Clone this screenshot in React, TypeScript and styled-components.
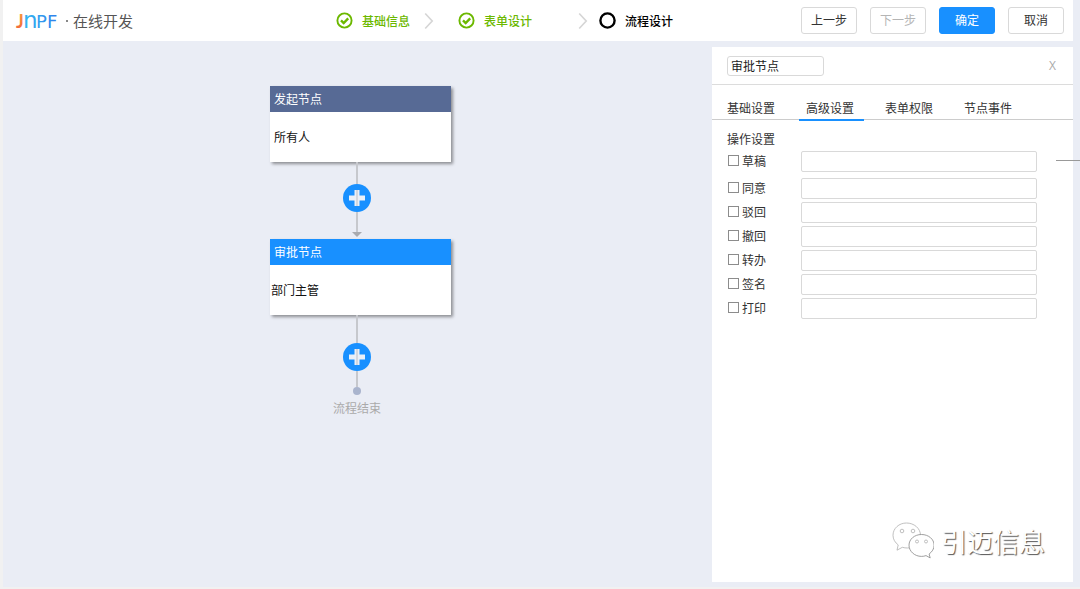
import React, { useState } from "react";
import styled, { createGlobalStyle } from "styled-components";

const GlobalStyle = createGlobalStyle`
  * { box-sizing: border-box; }
  body {
    margin: 0;
    background: #f1f1f1;
    color: #333;
    font-family: "Noto Sans CJK SC", sans-serif;
    font-size: 12px;
    line-height: 16px;
  }
  button, input { font: inherit; color: inherit; }
`;

const Page = styled.div`
  display: flex;
  min-height: 100vh;
  padding: 0 0 2px 3px;
`;

const Shell = styled.div`
  flex: 1;
  display: flex;
  flex-direction: column;
  background: #eaedf5;
`;

const Header = styled.header`
  display: flex;
  align-items: center;
  height: 41px;
  margin-right: 7px;
  padding: 0 9px 0 12px;
  background: #fff;
`;

const Brand = styled.div`
  display: flex;
  align-items: center;
  width: 321px;
  color: #555;
  font-size: 15px;
  line-height: 20px;
`;

const BrandDot = styled.span`
  width: 2px;
  height: 2px;
  margin: 0 5px;
  background: #888;
`;

const Steps = styled.ol`
  flex: 1;
  display: flex;
  margin: 0;
  padding: 0;
  list-style: none;
`;

const Step = styled.li<{ $width: number; $after: number; $done: boolean }>`
  display: flex;
  align-items: center;
  gap: 9px;
  width: ${(p) => p.$width}px;
  padding-right: ${(p) => p.$after}px;
  color: ${(p) => (p.$done ? "#6cb800" : "#000")};
  font-weight: 500;
  white-space: nowrap;

  svg:last-child { margin-left: auto; }
`;

const Actions = styled.div`
  display: flex;
  gap: 13px;
`;

const ActionButton = styled.button<{ $primary?: boolean }>`
  width: 56px;
  height: 27px;
  padding: 0 0 2px;
  border: 1px solid ${(p) => (p.$primary ? "#1890ff" : "#d9d9d9")};
  border-radius: 3px;
  background: ${(p) => (p.$primary ? "#1890ff" : "#fff")};
  color: ${(p) => (p.$primary ? "#fff" : "#333")};
  &:disabled { color: #b5b5b5; }
`;

const Workspace = styled.div`
  flex: 1;
  display: flex;
`;

const Canvas = styled.main`
  flex: 1;
  display: flex;
  justify-content: center;
  padding: 45px 0 0 6px;
`;

const Flow = styled.div`
  width: 181px;
`;

const Node = styled.section`
  background: #fff;
  box-shadow: 2px 2px 3px rgba(0, 0, 0, 0.4);
`;

const NodeTitle = styled.h2<{ $color: string }>`
  margin: 0;
  padding: 5px 4px;
  background: ${(p) => p.$color};
  color: #fff;
  font-size: 12px;
  font-weight: 400;
  line-height: 16px;
`;

const NodeBody = styled.p<{ $inset: number }>`
  margin: 0;
  padding: 17px ${(p) => p.$inset}px;
  color: #111;
`;

const Link = styled.div`
  display: flex;
  flex-direction: column;
  align-items: center;
  width: 174px;
`;

const Line = styled.div<{ $length: number }>`
  width: 2px;
  height: ${(p) => p.$length}px;
  background: #c6c8cd;
`;

const AddButton = styled.button`
  display: block;
  width: 28px;
  height: 28px;
  padding: 0;
  border: 0;
  border-radius: 50%;
  background: #1890ff;
  svg { display: block; }
`;

const Arrow = styled.div`
  margin-bottom: 2px;
  border: 5px solid transparent;
  border-top-color: #a9abb0;
  border-bottom-width: 0;
`;

const EndDot = styled.div`
  width: 8px;
  height: 8px;
  border-radius: 50%;
  background: #a9b4cd;
`;

const EndLabel = styled.span`
  margin-top: 5px;
  color: #aaa;
`;

const Panel = styled.aside`
  position: relative;
  width: 361px;
  margin: 6px 7px 5px 0;
  background: #fff;
`;

const PanelHead = styled.div`
  display: flex;
  align-items: center;
  justify-content: space-between;
  height: 38px;
  padding: 0 17px 0 15px;
  border-bottom: 1px solid #dcdcdc;
`;

const NameInput = styled.input`
  width: 97px;
  height: 20px;
  padding: 0 3px;
  border: 1px solid #d9d9d9;
  border-radius: 3px;
  color: #222;
`;

const CloseButton = styled.button`
  padding: 0;
  border: 0;
  background: none;
  color: #aaa;
  font-family: "Open Sans", sans-serif;
`;

const Tabs = styled.div`
  display: flex;
  gap: 14px;
  height: 35px;
  padding-left: 8px;
  border-bottom: 1px solid #ccc;
`;

const Tab = styled.button<{ $active: boolean }>`
  width: 65px;
  height: 36px;
  padding: 11px 0 0 7px;
  border: 0;
  border-bottom: 2px solid ${(p) => (p.$active ? "#1890ff" : "transparent")};
  background: none;
  text-align: left;
  white-space: nowrap;
`;

const Settings = styled.fieldset`
  display: flex;
  flex-direction: column;
  gap: 3px;
  margin: 0;
  padding: 0 36px 0 16px;
  border: 0;
`;

const SettingsTitle = styled.legend`
  margin-left: -1px;
  padding: 11px 0 4px;
`;

const Row = styled.div`
  display: flex;
  align-items: center;
  height: 21px;
  &:first-of-type { margin-bottom: 3px; }
`;

const CheckLabel = styled.label`
  display: flex;
  align-items: center;
  gap: 3px;
  width: 73px;
  padding-bottom: 1px;
`;

const Checkbox = styled.input`
  appearance: none;
  width: 11px;
  height: 11px;
  margin: 0 0 1px;
  border: 1px solid #8c8c8c;
  background: #fff;
  &:checked { background: #1890ff; }
`;

const TextBox = styled.input`
  flex: 1;
  min-width: 0;
  height: 21px;
  padding: 0 4px;
  border: 1px solid #d9d9d9;
  border-radius: 2px;
`;

const EdgeLine = styled.div`
  position: absolute;
  top: 113px;
  right: -7px;
  width: 24px;
  height: 1px;
  background: #999;
`;

const Watermark = styled.div`
  position: absolute;
  right: 28px;
  bottom: 22px;
  display: flex;
  align-items: center;
  gap: 7px;
  color: #fff;
  font-size: 26px;
  line-height: 38px;
  text-shadow: 1px 1px 1px #555;
`;

const Logo = () => (
  <svg width="46" height="36" viewBox="0 0 46 36" role="img" aria-label="JNPF">
    <defs>
      <linearGradient id="warm" x1="0" y1="0" x2="0" y2="1">
        <stop offset="0" stopColor="#f9a13a" />
        <stop offset="1" stopColor="#f0603c" />
      </linearGradient>
      <linearGradient id="cool" gradientUnits="userSpaceOnUse" x1="9" y1="0" x2="44" y2="0">
        <stop offset="0" stopColor="#35b8f2" />
        <stop offset="1" stopColor="#2f7bea" />
      </linearGradient>
    </defs>
    <g fontFamily="'DejaVu Sans', sans-serif" fontSize="18">
      <text x="1" y="25" fill="url(#warm)" fontFamily="Lato, sans-serif" fontWeight="700">J</text>
      <text x="8" y="25" fill="url(#cool)" fontSize="23">n</text>
      <text x="21" y="25" fill="url(#cool)">P</text>
      <text x="32" y="25" fill="url(#cool)">F</text>
    </g>
  </svg>
);

const StepIcon = ({ done }: { done: boolean }) => (
  <svg width="17" height="17" viewBox="0 0 17 17" fill="none" stroke="currentColor" aria-hidden="true">
    <circle cx="8.5" cy="8.5" r="7.1" strokeWidth={done ? 1.9 : 2.4} />
    {done && <path d="M5 8.3l2.7 2.7 4.5-4.6" strokeWidth="2.4" />}
  </svg>
);

const Chevron = () => (
  <svg width="10" height="18" viewBox="0 0 10 18" fill="none" stroke="#d6d6d6" strokeWidth="1.7" aria-hidden="true">
    <path d="M1.2 1.5L8.2 9l-7 7.5" />
  </svg>
);

const Plus = () => (
  <svg width="28" height="28" viewBox="0 0 28 28" aria-hidden="true">
    <path d="M11.5 6h5v5.500H22v5h-5.500V22h-5v-5.500H6v-5h5.500z" fill="#eaf0f8" />
    <path d="M14 6v16" stroke="#c9ccd3" strokeWidth="1.4" />
  </svg>
);

const WeChat = () => (
  <svg width="43" height="38" viewBox="0 0 43 38" fill="#fff" stroke="#b0b0b0" strokeWidth="0.8" aria-hidden="true">
    <path d="M15.500 1C8 1 2 6.400 2 13.300c0 4 2.100 7.300 5.200 9.600L6 28.200l5.300-2.900c1.700.5 3.400.7 5.200.7 7.500 0 13-5.500 13-12.600S23 1 15.500 1z" />
    <circle cx="11" cy="9" r="1.800" />
    <circle cx="22" cy="9" r="1.800" />
    <path d="M30.500 12.500c-7 0-12.500 4.700-12.500 10.700s5.500 11.200 12.500 11.200c1.600 0 3.100-.3 4.500-.8l4.200 2.300-1.100-3.900c3-2.100 5-5.200 5-8.800 0-6-5.600-10.700-12.600-10.700z" stroke="#888" />
    <circle cx="26" cy="19.500" r="1.500" />
    <circle cx="35" cy="19.500" r="1.500" />
  </svg>
);

const TABS = ["基础设置", "高级设置", "表单权限", "节点事件"];
const OPERATIONS = ["草稿", "同意", "驳回", "撤回", "转办", "签名", "打印"];

export default function App() {
  const [tab, setTab] = useState(1);
  const [name, setName] = useState("审批节点");

  return (
    <Page>
      <GlobalStyle />
      <Shell>
        <Header>
          <Brand>
            <Logo />
            <BrandDot />
            在线开发
          </Brand>
          <Steps>
            <Step $width={122} $after={24} $done>
              <StepIcon done />
              基础信息
              <Chevron />
            </Step>
            <Step $width={141} $after={11} $done>
              <StepIcon done />
              表单设计
              <Chevron />
            </Step>
            <Step $width={80} $after={0} $done={false}>
              <StepIcon done={false} />
              <span>流程设计</span>
            </Step>
          </Steps>
          <Actions>
            <ActionButton>上一步</ActionButton>
            <ActionButton disabled>下一步</ActionButton>
            <ActionButton $primary>确定</ActionButton>
            <ActionButton>取消</ActionButton>
          </Actions>
        </Header>

        <Workspace>
          <Canvas>
            <Flow>
              <Node>
                <NodeTitle $color="#576a95">发起节点</NodeTitle>
                <NodeBody $inset={4}>所有人</NodeBody>
              </Node>
              <Link>
                <Line $length={22} />
                <AddButton aria-label="添加节点"><Plus /></AddButton>
                <Line $length={20} />
                <Arrow />
              </Link>
              <Node>
                <NodeTitle $color="#1890ff">审批节点</NodeTitle>
                <NodeBody $inset={1}>部门主管</NodeBody>
              </Node>
              <Link>
                <Line $length={28} />
                <AddButton aria-label="添加节点"><Plus /></AddButton>
                <Line $length={16} />
                <EndDot />
                <EndLabel>流程结束</EndLabel>
              </Link>
            </Flow>
          </Canvas>

          <Panel>
            <PanelHead>
              <NameInput aria-label="节点名称" value={name} onChange={(e) => setName(e.target.value)} />
              <CloseButton aria-label="关闭">X</CloseButton>
            </PanelHead>
            <Tabs role="tablist">
              {TABS.map((label, i) => (
                <Tab key={label} role="tab" aria-selected={i === tab} $active={i === tab} onClick={() => setTab(i)}>
                  {label}
                </Tab>
              ))}
            </Tabs>
            <Settings>
              <SettingsTitle>操作设置</SettingsTitle>
              {OPERATIONS.map((label) => (
                <Row key={label}>
                  <CheckLabel>
                    <Checkbox type="checkbox" />
                    {label}
                  </CheckLabel>
                  <TextBox type="text" aria-label={label + "名称"} />
                </Row>
              ))}
            </Settings>
            <EdgeLine />
            <Watermark>
              <WeChat />
              引迈信息
            </Watermark>
          </Panel>
        </Workspace>
      </Shell>
    </Page>
  );
}
